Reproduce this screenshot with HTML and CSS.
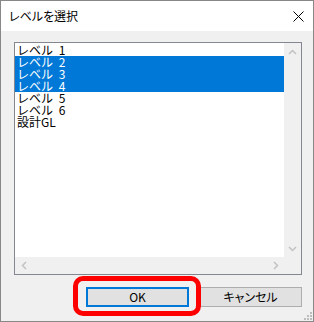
FILE: index.html
```html
<!DOCTYPE html>
<html lang="ja">
<head>
<meta charset="utf-8">
<title>レベルを選択</title>
<link rel="stylesheet" href="styles.css">
</head>
<body>
<div class="window">
  <div class="titlebar">
    <span class="title">レベルを選択</span>
    <svg class="close" width="11" height="11" viewBox="0 0 11 11"><path d="M0.5 0.5 L10.5 10.5 M10.5 0.5 L0.5 10.5" stroke="#000" stroke-width="1" fill="none"/></svg>
  </div>
  <div class="body">
    <div class="listbox">
      <ul class="items">
        <li>レベル 1</li>
        <li class="sel">レベル 2</li>
        <li class="sel">レベル 3</li>
        <li class="sel">レベル 4</li>
        <li>レベル 5</li>
        <li>レベル 6</li>
        <li>設計GL</li>
      </ul>
      <div class="vscroll">
        <span class="arrow"><svg width="9" height="6" viewBox="0 0 9 6"><path d="M1 5 L4.5 1.5 L8 5" stroke="#c2c2c2" stroke-width="1.5" fill="none"/></svg></span>
        <span class="arrow"><svg width="9" height="6" viewBox="0 0 9 6"><path d="M1 1 L4.5 4.5 L8 1" stroke="#c2c2c2" stroke-width="1.5" fill="none"/></svg></span>
      </div>
      <div class="hscroll">
        <span class="arrow"><svg width="6" height="9" viewBox="0 0 6 9"><path d="M5 1 L1.5 4.5 L5 8" stroke="#c2c2c2" stroke-width="1.5" fill="none"/></svg></span>
        <span class="arrow"><svg width="6" height="9" viewBox="0 0 6 9"><path d="M1 1 L4.5 4.5 L1 8" stroke="#c2c2c2" stroke-width="1.5" fill="none"/></svg></span>
      </div>
      <div class="corner"></div>
    </div>
    <div class="buttons">
      <button class="btn default">OK</button>
      <button class="btn">キャンセル</button>
    </div>
  </div>
  <div class="highlight"></div>
  <svg class="grip" width="10" height="10" viewBox="0 0 10 10">
    <rect x="8" y="2" width="2" height="2" fill="#bcbcbc"/>
    <rect x="5" y="5" width="2" height="2" fill="#bcbcbc"/>
    <rect x="8" y="5" width="2" height="2" fill="#bcbcbc"/>
    <rect x="2" y="8" width="2" height="2" fill="#bcbcbc"/>
    <rect x="5" y="8" width="2" height="2" fill="#bcbcbc"/>
    <rect x="8" y="8" width="2" height="2" fill="#bcbcbc"/>
  </svg>
</div>
</body>
</html>
```
FILE: styles.css
```css
* { box-sizing: border-box; }
html, body { margin: 0; padding: 0; background: #fff; }
body {
  font-family: "Noto Sans CJK JP", "Noto Sans", sans-serif;
  font-size: 12px;
  color: #000;
}
.window {
  position: relative;
  width: 314px;
  height: 322px;
  border: 1px solid #888;
  display: flex;
  flex-direction: column;
  background: #f0f0f0;
}
.titlebar {
  height: 30px;
  background: #fff;
  display: flex;
  align-items: center;
  justify-content: space-between;
  padding: 0 9px 0 8px;
}
.title {
  font-size: 12px;
  font-feature-settings: "palt";
  color: #000;
  line-height: 12px;
}
.close { display: block; }
.body {
  flex: 1;
  padding: 11px 11px 0 13px;
  display: flex;
  flex-direction: column;
}
.listbox {
  width: 288px;
  height: 233px;
  border: 1px solid #828790;
  background: #fff;
  display: grid;
  grid-template-columns: 1fr 17px;
  grid-template-rows: 1fr 17px;
}
.items {
  list-style: none;
  margin: 0;
  padding: 1px 0 0 0;
  overflow: hidden;
}
.items li {
  height: 12px;
  line-height: 12px;
  padding-left: 2px;
  white-space: pre;
  font-size: 12px;
  word-spacing: 3px;
}
.items li.sel {
  background: #0078d7;
  color: #fff;
}
.vscroll {
  background: #f0f0f0;
  display: flex;
  flex-direction: column;
  justify-content: space-between;
}
.hscroll {
  background: #f0f0f0;
  display: flex;
  justify-content: space-between;
}
.corner { background: #f0f0f0; }
.arrow {
  width: 17px;
  height: 17px;
  display: flex;
  align-items: center;
  justify-content: center;
}
.arrow svg { display: block; }
.buttons {
  margin-top: 12px;
  display: flex;
  justify-content: flex-end;
  gap: 10px;
}
.btn {
  width: 103px;
  height: 20px;
  margin: 0;
  padding: 0;
  background: #e1e1e1;
  border: 1px solid #adadad;
  font-family: "Noto Sans CJK JP", "Noto Sans", sans-serif;
  font-size: 12px;
  font-feature-settings: "palt";
  line-height: 16px;
  color: #000;
}
.btn.default {
  border: 2px solid #0078d7;
}
.highlight {
  position: absolute;
  left: 72px;
  top: 275px;
  width: 128px;
  height: 40px;
  border: 5px solid #ff0000;
  border-radius: 10px;
}
.grip {
  position: absolute;
  right: 1px;
  bottom: 1px;
}
```
